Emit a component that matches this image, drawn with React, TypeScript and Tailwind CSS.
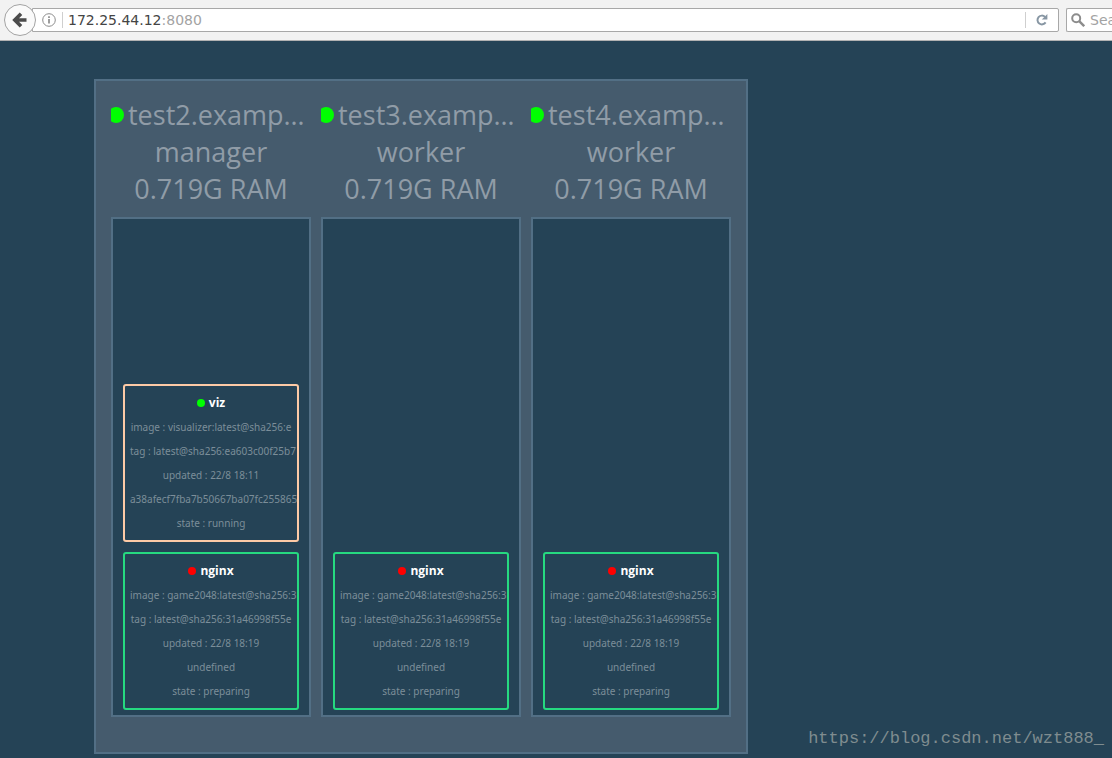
type Task = {
  name: string;
  dot: string;
  ring: string;
  lines: string[];
};

type Node = {
  host: string;
  role: string;
  memory: string;
  tasks: Task[];
};

const nginx: Task = {
  name: "nginx",
  dot: "bg-[#ff0000]",
  ring: "ring-[#26d980]",
  lines: [
    "image : game2048:latest@sha256:3",
    "tag : latest@sha256:31a46998f55e",
    "updated : 22/8 18:19",
    "undefined",
    "state : preparing",
  ],
};

const viz: Task = {
  name: "viz",
  dot: "bg-[#00ff00]",
  ring: "ring-[#fdcaa6]",
  lines: [
    "image : visualizer:latest@sha256:e",
    "tag : latest@sha256:ea603c00f25b7",
    "updated : 22/8 18:11",
    "a38afecf7fba7b50667ba07fc255865",
    "state : running",
  ],
};

const nodes: Node[] = [
  { host: "test2.examp…", role: "manager", memory: "0.719G RAM", tasks: [viz, nginx] },
  { host: "test3.examp…", role: "worker", memory: "0.719G RAM", tasks: [nginx] },
  { host: "test4.examp…", role: "worker", memory: "0.719G RAM", tasks: [nginx] },
];

function BrowserBar() {
  return (
    <header className="flex h-[41px] items-center overflow-hidden border-b border-[#b2b2b2] bg-[#f2f2f2] pl-1 font-['DejaVu_Sans',sans-serif] text-sm">
      <button
        type="button"
        aria-label="Back"
        className="z-10 flex size-8 shrink-0 items-center justify-center rounded-full border border-[#a3a3a3] bg-[#fafafa]"
      >
        <svg viewBox="0 0 16 16" className="size-4" fill="none" stroke="#4c4c4c" strokeWidth="3.6">
          <path d="M9 1.8 2.8 8 9 14.2M3.4 8H14.5" />
        </svg>
      </button>
      <div className="-ml-1 flex h-6 min-w-0 flex-1 items-center rounded-r-xs border border-[#a8a8a8] bg-white pl-[9px]">
        <svg viewBox="0 0 14 14" className="size-[14px] shrink-0" fill="none" stroke="#8c8c8c">
          <circle cx="7" cy="7" r="6.3" />
          <path d="M7 6v4.6M7 3.2v1.7" strokeWidth="1.7" />
        </svg>
        <span className="ml-[6px] h-4 w-px shrink-0 bg-[#cfcfcf]" />
        <input
          type="text"
          aria-label="Address"
          defaultValue="172.25.44.12"
          className="ml-[5px] field-sizing-content text-[#444444] outline-none"
        />
        <span className="flex-1 text-[#a3a3a3]">:8080</span>
        <button
          type="button"
          aria-label="Reload"
          className="flex h-4 w-[33px] items-center justify-center border-l border-[#cfcfcf]"
        >
          <svg viewBox="0 0 12 12" className="size-3" fill="none" stroke="#8796a3" strokeWidth="2">
            <path d="M9.6 8.4A4.4 4.4 0 1 1 9 2.9" />
            <path d="M11.4 0v5.6H5.8Z" fill="#8796a3" stroke="none" />
          </svg>
        </button>
      </div>
      <label className="ml-[7px] flex h-6 w-[46px] shrink-0 items-center rounded-l-xs border border-r-0 border-[#a8a8a8] bg-white pl-1">
        <svg viewBox="0 0 14 14" className="size-[14px] shrink-0" fill="none" stroke="#8c8c8c" strokeWidth="2">
          <circle cx="5.2" cy="5.2" r="4" />
          <path d="m8.2 8.2 5 5" strokeWidth="2.4" />
        </svg>
        <input
          type="text"
          aria-label="Search"
          placeholder="Search"
          className="ml-[5px] w-full min-w-0 outline-none placeholder:text-[#a3a3a3]"
        />
      </label>
    </header>
  );
}

function TaskCard({ task }: { task: Task }) {
  return (
    <li
      className={`overflow-hidden rounded-[3px] p-[7px] text-center font-['Noto_Sans',sans-serif] text-[10px] leading-6 whitespace-nowrap text-[#7c8e99] ring-2 ring-inset ${task.ring}`}
    >
      <h3 className="flex items-center justify-center gap-1 font-['Open_Sans',sans-serif] text-xs leading-6 font-bold text-white">
        <span className={`size-2 rounded-full ${task.dot}`} />
        {task.name}
      </h3>
      {task.lines.map((line) => (
        <p key={line}>{line}</p>
      ))}
    </li>
  );
}

function NodeColumn({ node }: { node: Node }) {
  return (
    <section className="flex w-[200px] flex-col gap-[10px]">
      <div className="text-center text-[27px] leading-[37px] text-[#909ca7]">
        <h2 className="flex items-center gap-1 overflow-hidden whitespace-nowrap">
          <span className="-ml-[3px] size-4 shrink-0 rounded-full bg-[#00ff00]" />
          {node.host}
        </h2>
        <p>{node.role}</p>
        <p>{node.memory}</p>
      </div>
      <ul className="flex min-h-[500px] flex-col justify-end gap-[10px] border-2 border-[#526f85] bg-[#254356] px-[10px] pb-[5px]">
        {node.tasks.map((task) => (
          <TaskCard key={task.name} task={task} />
        ))}
      </ul>
    </section>
  );
}

export default function App() {
  return (
    <div className="relative min-h-screen bg-[#254356] font-['Open_Sans',sans-serif]">
      <BrowserBar />
      <main className="px-[94px] pt-[38px] pb-1">
        <div className="flex w-fit gap-[10px] border-2 border-[#526f85] bg-[#455b6d] px-[15px] pt-[15px] pb-[35px]">
          {nodes.map((node) => (
            <NodeColumn key={node.host} node={node} />
          ))}
        </div>
      </main>
      <a
        href="https://blog.csdn.net/wzt888_"
        className="absolute right-2 bottom-[7px] font-['Liberation_Mono',monospace] text-[17px] leading-6 text-[#7f8c8f]"
      >
        https://blog.csdn.net/wzt888_
      </a>
    </div>
  );
}
